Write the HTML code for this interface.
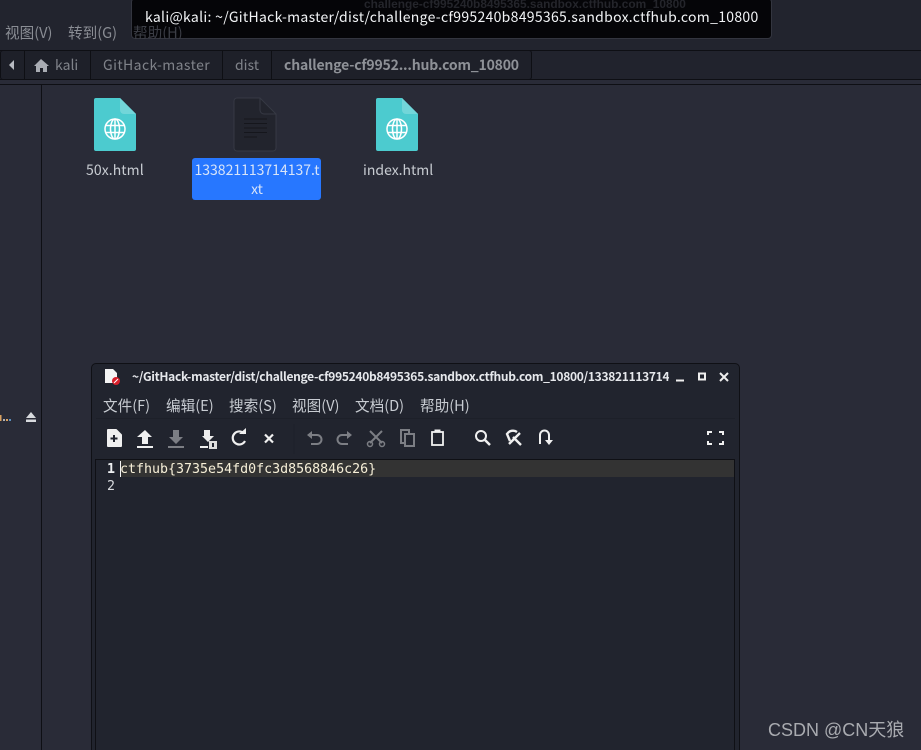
<!DOCTYPE html>
<html lang="zh"><head><meta charset="utf-8"><style>
html,body{margin:0;padding:0;background:#282a36}
#r{position:relative;width:921px;height:750px;overflow:hidden;background:#292b37;font-family:"DejaVu Sans","Noto Sans CJK SC",sans-serif}
.a{position:absolute;white-space:nowrap}
.m{font-family:"Noto Sans CJK SC","DejaVu Sans",sans-serif;font-size:14.6px;line-height:18px;color:#c8ccd2}
</style></head><body><div id="r">
<div class="a" style="left:0;top:0;width:921px;height:50px;background:#22242e"></div>
<div class="a m" style="left:5px;top:24px;color:#8a8d94">视图(V)</div>
<div class="a m" style="left:68px;top:24px;color:#8a8d94">转到(G)</div>
<div class="a" style="left:131px;top:-2px;width:641px;height:41px;background:#050508;border:1px solid #33353f;border-radius:4px;box-sizing:border-box"></div>
<div class="a m" style="left:133px;top:24px;color:#3c3e46;height:15px;overflow:hidden">帮助(H)</div>
<div class="a" style="left:364px;top:-3px;font:bold 11.9px 'Liberation Sans',sans-serif;color:#24252b">challenge-cf995240b8495365.sandbox.ctfhub.com_10800</div>
<div class="a" style="left:145px;top:8px;font:14px/18px 'Noto Sans CJK SC',sans-serif;letter-spacing:.3px;color:#f2f4f6">kali@kali: ~/GitHack-master/dist/challenge-cf995240b8495365.sandbox.ctfhub.com_10800</div>

<div class="a" style="left:0;top:50px;width:921px;height:30px;background:#21232d;border-top:1px solid #0e0f14;border-bottom:1px solid #0e0f14;box-sizing:border-box"></div>
<div class="a" style="left:0;top:84px;width:921px;height:1px;background:#0e0f14"></div>
<div class="a" style="left:0;top:50px;width:532px;height:30px;background:#1e2029;border:1px solid #0e0f14;border-radius:3px;box-sizing:border-box"></div>
<div class="a" style="left:24px;top:51px;width:1px;height:28px;background:#0e0f14"></div>
<div class="a" style="left:90px;top:51px;width:1px;height:28px;background:#0e0f14"></div>
<div class="a" style="left:222px;top:51px;width:1px;height:28px;background:#0e0f14"></div>
<div class="a" style="left:271px;top:51px;width:1px;height:28px;background:#0e0f14"></div>
<svg class="a" style="left:0;top:50px" width="60" height="30"><path d="M14 10v10l-5-5z" fill="#b8bbc2"/><path d="M41 9l-7 7h2v6h4v-4h3v4h4v-6h2z" fill="#a9acb3"/></svg>
<div class="a m" style="left:55px;top:56px;font-size:14px;color:#80838a">kali</div>
<div class="a m" style="left:103px;top:56px;font-size:14px;letter-spacing:.42px;color:#80838a">GitHack-master</div>
<div class="a m" style="left:235px;top:56px;font-size:14px;color:#80838a">dist</div>
<div class="a m" style="left:284px;top:56px;font-size:14px;font-weight:700;letter-spacing:-.19px;color:#8e9197">challenge-cf9952...hub.com_10800</div>

<div class="a" style="left:41px;top:85px;width:1px;height:665px;background:#0e0f14"></div>

<svg class="a" style="left:93px;top:98px" width="43" height="54"><path d="M3 0H27L43 16V51a2 2 0 0 1-2 2H3a2 2 0 0 1-2-2V2a2 2 0 0 1 2-2z" fill="#4ccbcf"/><path d="M27 0L43 16H31a4 4 0 0 1-4-4z" fill="#72d6d9"/><g fill="none" stroke="#fff" stroke-width="1.5"><circle cx="22" cy="31" r="10"/><ellipse cx="22" cy="31" rx="4.500" ry="10"/><path d="M12 27.500H32M12 34.500H32M22 21V41"/></g></svg>
<svg class="a" style="left:375px;top:98px" width="43" height="54"><path d="M3 0H27L43 16V51a2 2 0 0 1-2 2H3a2 2 0 0 1-2-2V2a2 2 0 0 1 2-2z" fill="#4ccbcf"/><path d="M27 0L43 16H31a4 4 0 0 1-4-4z" fill="#72d6d9"/><g fill="none" stroke="#fff" stroke-width="1.5"><circle cx="22" cy="31" r="10"/><ellipse cx="22" cy="31" rx="4.500" ry="10"/><path d="M12 27.500H32M12 34.500H32M22 21V41"/></g></svg>
<svg class="a" style="left:233px;top:97px" width="45" height="56"><path d="M4 1H27L43 17V51a3 3 0 0 1-3 3H4a3 3 0 0 1-3-3V4a3 3 0 0 1 3-3z" fill="#22242d" stroke="#363944"/><path d="M27 1V13a4 4 0 0 0 4 4H43" fill="none" stroke="#363944"/><path d="M11 22H34M11 26.500H34M11 31H34M11 35.500H34M11 40H24" stroke="#15161c" stroke-width="1"/></svg>
<div class="a m" style="left:86px;top:161px;font-size:14px;letter-spacing:.1px">50x.html</div>
<div class="a" style="left:192px;top:158px;width:129px;height:42px;background:#2777ff;border-radius:3px"></div>
<div class="a m" style="left:193px;top:161px;width:128px;font-size:14px;line-height:19px;color:#d8e4f8;text-align:center;white-space:normal;word-break:break-all">133821113714137.txt</div>
<div class="a m" style="left:363px;top:161px;font-size:14px">index.html</div>
<svg class="a" style="left:25px;top:411px" width="12" height="12"><path d="M6 1L11 7H1z M1 8.500H11V11H1z" fill="#d8dade"/></svg>
<svg class="a" style="left:0;top:414px" width="12" height="8"><rect x="0" y="1" width="1.500" height="6" fill="#d8a060"/><rect x="3" y="5" width="2" height="2" fill="#b0b2b6"/><rect x="6" y="5" width="2" height="2" fill="#d8a060"/><rect x="9" y="5" width="2" height="2" fill="#5a90c0"/></svg>

<div class="a" style="left:91px;top:363px;width:649px;height:400px;background:#21242e;border:1px solid #0f1015;border-radius:5px;box-sizing:border-box"></div>
<svg class="a" style="left:104px;top:368px" width="18" height="18"><path d="M1 1H9L13 5V15H1z" fill="#f4f4f4"/><circle cx="12" cy="13" r="4" fill="#d8202c"/><path d="M10 15L14 11" stroke="#fff"/></svg>
<div class="a" style="left:132px;top:368px;font:bold 12px/18px 'Noto Sans CJK SC',sans-serif;letter-spacing:-.3px;color:#e6e8ec;width:537px;overflow:hidden">~/GitHack-master/dist/challenge-cf995240b8495365.sandbox.ctfhub.com_10800/133821113714</div>
<svg class="a" style="left:670px;top:368px" width="60" height="18"><path d="M6 12.500H14" stroke="#eee" stroke-width="2"/><rect x="29" y="5.500" width="6" height="6" fill="none" stroke="#eee" stroke-width="2"/><path d="M50 5L58 13M58 5L50 13" stroke="#eee" stroke-width="2"/></svg>
<div class="a m" style="left:103px;top:397px">文件(F)</div>
<div class="a m" style="left:166px;top:397px">编辑(E)</div>
<div class="a m" style="left:229px;top:397px">搜索(S)</div>
<div class="a m" style="left:292px;top:397px">视图(V)</div>
<div class="a m" style="left:355px;top:397px">文档(D)</div>
<div class="a m" style="left:420px;top:397px">帮助(H)</div>
<div class="a" style="left:96px;top:418px;width:639px;height:1px;background:#1d2029"></div>
<svg class="a" style="left:96px;top:424px" width="640" height="30" fill="none">
<path d="M12 6H20L25 11V22H12z" fill="#f0f0f0" stroke="#f0f0f0" stroke-linejoin="round" stroke-width="2"/><path d="M18 11V18M14.500 14.500H21.500" stroke="#21242e" stroke-width="2"/>
<path d="M49 6L56 13H52V20H46V13H41z" fill="#f0f0f0"/><path d="M41 23H57" stroke="#f0f0f0" stroke-width="2"/>
<path d="M77 6H83V13H87L80 20L73 13H77z" fill="#7c7e84"/><path d="M72 23H88" stroke="#7c7e84" stroke-width="2"/>
<path d="M108 6H114V12H118L112 18L106 12H108z" fill="#eee"/><path d="M104 23H112" stroke="#eee" stroke-width="2"/><rect x="113" y="17" width="8" height="8" fill="#ddd"/><path d="M117 19V23" stroke="#21242e" stroke-width="2"/>
<path d="M148 9.500A6.500 6.500 0 1 0 149 17" stroke="#f0f0f0" stroke-width="2.200"/><path d="M143 10H150V4z" fill="#f0f0f0"/>
<path d="M169 10.500L177 18.500M177 10.500L169 18.500" stroke="#f0f0f0" stroke-width="2.200"/>
<path d="M198 0V30" stroke="#1d2029"/>
<path d="M213 11H221A4.500 4.500 0 0 1 221 20H215" stroke="#7c7e84" stroke-width="2"/><path d="M216 7L211 11L216 15z" fill="#7c7e84"/>
<path d="M254 11H246A4.500 4.500 0 0 0 246 20H252" stroke="#7c7e84" stroke-width="2"/><path d="M251 7L256 11L251 15z" fill="#7c7e84"/>
<path d="M274 7L286 19M286 7L274 19" stroke="#7c7e84" stroke-width="2"/><circle cx="274" cy="20" r="2.500" stroke="#7c7e84" stroke-width="1.500"/><circle cx="286" cy="20" r="2.500" stroke="#7c7e84" stroke-width="1.500"/>
<path d="M305 6H313V19H305z" stroke="#7c7e84" stroke-width="2"/><rect x="309" y="10" width="9" height="12" fill="#21242e" stroke="#7c7e84" stroke-width="2"/>
<rect x="336" y="8" width="11" height="13" stroke="#f0f0f0" stroke-width="1.800"/><path d="M339 8V6H344V8z" fill="#f0f0f0" stroke="#f0f0f0"/>
<circle cx="385" cy="12" r="5" stroke="#f0f0f0" stroke-width="2"/><path d="M389 16L394 21" stroke="#f0f0f0" stroke-width="2.500"/>
<path d="M421 8A7 7 0 0 0 411 10L414 17" stroke="#f0f0f0" stroke-width="2.400"/><path d="M413 20L424 9M417 13L425 21" stroke="#f0f0f0" stroke-width="2.400"/>
<path d="M444 20V11A4.500 4.500 0 0 1 453 11V16" stroke="#f0f0f0" stroke-width="2"/><path d="M449 16H457L453 21z" fill="#f0f0f0"/>
<path d="M612 11V8H616M623 8H627V11M627 17V20H623M616 20H612V17" stroke="#f0f0f0" stroke-width="2"/>
</svg>

<div class="a" style="left:95px;top:459px;width:640px;height:291px;background:#21242e;border:1px solid #0f1015;border-bottom:0;box-sizing:border-box"></div>
<div class="a" style="left:120px;top:460px;width:614px;height:17px;background:#333333"></div>
<div class="a" style="left:120px;top:461px;width:1px;height:16px;background:#f4f4f4"></div>
<div class="a" style="left:107px;top:461px;font:bold 13.300px/17px 'DejaVu Sans Mono',monospace;color:#eef0f2">1</div>
<div class="a" style="left:107px;top:478px;font:13.300px/17px 'DejaVu Sans Mono',monospace;color:#d8dade">2</div>
<div class="a" style="left:120px;top:461px;font:13.300px/17px 'DejaVu Sans Mono',monospace;color:#f6efd8">ctfhub{3735e54fd0fc3d8568846c26}</div>
<div class="a" style="left:768px;top:719px;font:18px/23px 'Liberation Sans','Noto Sans CJK SC',sans-serif;color:#a9abb0">CSDN @CN天狼</div>
</div></body></html>
